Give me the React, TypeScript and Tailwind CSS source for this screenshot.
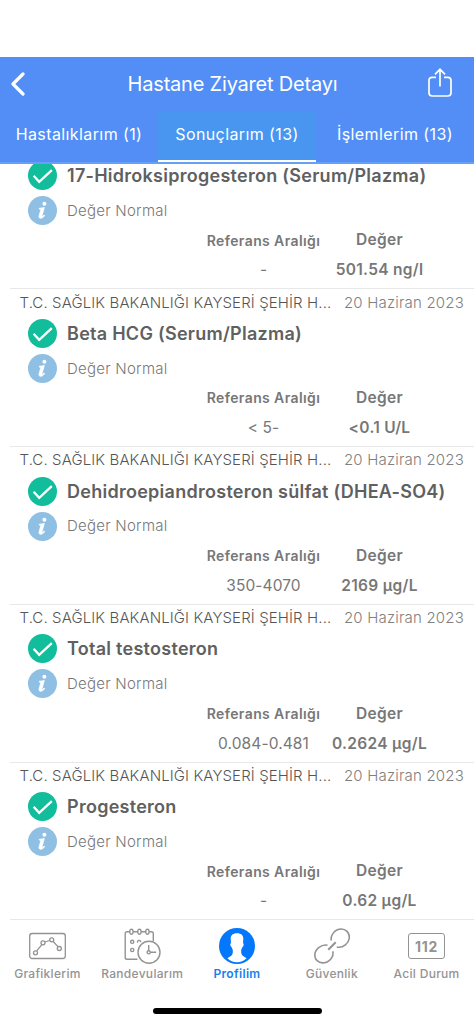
import clsx from 'clsx'
import { PropsWithChildren } from 'react'

type Result = {
  name: string
  range: string
  value: string
}

const results: Result[] = [
  { name: '17-Hidroksiprogesteron (Serum/Plazma)', range: '-', value: '501.54 ng/l' },
  { name: 'Beta HCG (Serum/Plazma)', range: '< 5-', value: '<0.1 U/L' },
  { name: 'Dehidroepiandrosteron sülfat (DHEA-SO4)', range: '350-4070', value: '2169 µg/L' },
  { name: 'Total testosteron', range: '0.084-0.481', value: '0.2624 µg/L' },
  { name: 'Progesteron', range: '-', value: '0.62 µg/L' },
]

function CheckBadge() {
  return (
    <svg className="size-[29px] shrink-0" viewBox="0 0 29 29" fill="none">
      <circle cx="14.5" cy="14.5" r="14.5" fill="#11bd9a" />
      <path d="M5.6 14.8l5.6 6L23.8 9.2" stroke="#fff" strokeWidth="2.3" />
    </svg>
  )
}

function InfoBadge() {
  return (
    <svg className="size-[29px] shrink-0" viewBox="0 0 29 29">
      <circle cx="14.5" cy="14.5" r="14.5" fill="#8fbfe2" />
      <circle cx="16.4" cy="7.8" r="2" fill="#fff" />
      <path
        d="M11.4 12.2c1.6 0 3.2-.3 4.9-.7l-2.3 8.300c-.2.8.2 1 .8.5l1.300-1.300.6.5c-1.200 1.800-2.600 2.800-4 2.800-1.500 0-2-1-1.600-2.500l1.500-5.400c.2-.9-.1-1.200-1.400-1.300z"
        fill="#fff"
        stroke="#fff"
        strokeWidth="0.8"
      />
    </svg>
  )
}

function Tab({ active, children }: PropsWithChildren<{ active?: boolean }>) {
  return (
    <div
      className={clsx(
        'flex h-full flex-1 items-center justify-center border-b-2 pb-1 tracking-[0.4px]',
        active ? 'border-white bg-[#4896ef]' : 'border-transparent',
      )}
    >
      {children}
    </div>
  )
}

function Header() {
  return (
    <header className="shrink-0 bg-[#528ef5] text-white">
      <div className="flex h-[54px] items-center justify-between pr-[22px] pl-2.5">
        <svg className="h-6 w-[15px]" viewBox="0 0 15 24" fill="none" stroke="currentColor" strokeWidth="3.2">
          <path d="M13 2L3 12l10 10" strokeLinecap="round" strokeLinejoin="round" />
        </svg>
        <h1 className="pl-3 text-[20px] font-normal tracking-[-0.2px] whitespace-nowrap">Hastane Ziyaret Detayı</h1>
        <svg className="mb-0.5 h-[30px] w-6" viewBox="0 0 24 30" fill="none" stroke="currentColor" strokeWidth="1.7">
          <path d="M8 9.400H4.200Q1 9.400 1 12.600v12.200Q1 28 4.200 28h15.600q3.200 0 3.200-3.200V12.600q0-3.200-3.200-3.200H16M12 18.500V1.600M7 6.300l5-5 5 5" />
        </svg>
      </div>
      <nav className="flex h-[51px] text-[16px] whitespace-nowrap">
        <Tab>Hastalıklarım (1)</Tab>
        <Tab active>Sonuçlarım (13)</Tab>
        <Tab>İşlemlerim (13)</Tab>
      </nav>
      <div className="h-[1.5px] bg-[#68a0f7]" />
    </header>
  )
}

function RowHeading() {
  return (
    <div className="h-7 shrink-0">
      <div className="ml-2.5 h-px bg-[#e8e8e8]" />
      <div className="flex h-[27px] items-center justify-between pr-2.5 pl-[19.5px] text-[15px] font-light whitespace-nowrap">
        <span className="tracking-[0.12px] text-[#555]">T.C. SAĞLIK BAKANLIĞI KAYSERİ ŞEHİR H...</span>
        <span className="tracking-[0.2px] text-[#808080]">20 Haziran 2023</span>
      </div>
    </div>
  )
}

function ResultRow({ result, first }: { result: Result; first: boolean }) {
  return (
    <li className={clsx('flex shrink-0 flex-col', first ? '-mt-[5px] h-[129.75px]' : 'h-[157.75px]')}>
      {!first && <RowHeading />}
      <div className="flex h-[34px] shrink-0 items-center gap-2.5 pl-7">
        <CheckBadge />
        <span className="text-[18px] font-semibold tracking-[0.27px] whitespace-nowrap text-[#606060]">{result.name}</span>
      </div>
      <div className="flex h-9 shrink-0 items-center gap-2.5 pl-7">
        <InfoBadge />
        <span className="pt-px text-[15px] font-light tracking-[0.25px] text-[#777]">Değer Normal</span>
      </div>
      <div className="grid shrink-0 grid-cols-[116px_116px] grid-rows-[23px_37px] items-center justify-items-center pl-[205.5px] whitespace-nowrap text-[#777]">
        <span className="text-[14px] font-semibold tracking-[0.4px]">Referans Aralığı</span>
        <span className="text-[15.5px] font-semibold tracking-[0.3px]">Değer</span>
        <span className="text-[15.5px] tracking-[0.1px]">{result.range}</span>
        <span className="text-[15.5px] font-semibold tracking-[0.3px]">{result.value}</span>
      </div>
    </li>
  )
}

function ChartIcon() {
  return (
    <svg className="h-9 w-[37px]" viewBox="0 0 37 36" fill="none" stroke="currentColor" strokeWidth="1.3">
      <rect x="0.7" y="5.5" width="35.6" height="25" rx="2.5" />
      <path d="M7.700 22.800l5.200-6.200M16 14l4.700-1.500M24.200 13.500l5 5.400" />
      <circle cx="6.5" cy="24.8" r="2" />
      <circle cx="14" cy="14.8" r="2" />
      <circle cx="22.7" cy="11.8" r="2" />
      <circle cx="30.3" cy="20.5" r="2" />
    </svg>
  )
}

function CalendarIcon() {
  return (
    <svg className="h-9 w-[37px]" viewBox="0 0 37 36" fill="none" stroke="currentColor" strokeWidth="1.4">
      <path d="M6 3.800H3q-1.800 0-1.800 1.800v23.800q0 1.800 1.800 1.800h10.500M9 3.800h5M17 3.800h5M25 3.800h2.500q1.800 0 1.800 1.800V13" />
      <rect x="5.8" y="1.2" width="3.2" height="5" rx="1.6" />
      <rect x="13.8" y="1.2" width="3.2" height="5" rx="1.6" />
      <rect x="21.8" y="1.2" width="3.2" height="5" rx="1.6" />
      <circle cx="8.2" cy="13.8" r="1.6" />
      <path d="M13.700 14.700a1.600 1.600 0 1 1 3-.6" />
      <circle cx="8.2" cy="22" r="1.6" />
      <circle cx="25" cy="24.3" r="11" />
      <circle cx="24.7" cy="24.3" r="1.6" />
      <path d="M24.700 22.500V17M26.400 24.300h5.800" />
    </svg>
  )
}

function ProfileIcon() {
  return (
    <svg className="size-9" viewBox="0 0 36 36">
      <circle cx="18" cy="18" r="18" fill="#0478fa" />
      <path
        d="M18 5.200c-4.700 0-6.300 2.300-6.300 5.600l.3 4.400c-.8 0-.8 1-.5 2.200.3 1 .6 1.400 1.100 1.500.3 1.300.7 2 1.200 2.700 0 2.600.2 4.300-1 5.700-1 1.200-3 1.800-4.400 3 2.600 2.500 5.900 3.900 9.600 3.900s7-1.400 9.600-3.900c-1.400-1.200-3.400-1.800-4.400-3-1.200-1.400-1-3.100-1-5.700.5-.7.9-1.400 1.200-2.700.5-.1.8-.5 1.100-1.500.3-1.200.3-2.200-.5-2.200l.3-4.400c0-3.300-1.600-5.600-6.300-5.600z"
        fill="#fff"
      />
    </svg>
  )
}

function LinkIcon() {
  return (
    <svg className="size-9" viewBox="0 0 36 36" fill="none" stroke="currentColor" strokeWidth="1.6">
      <path d="M17.300 12.500C16.300 7.500 20.500 1 27.300 1c4.500 0 8 3.500 8 8 0 6.200-6.300 11.400-12.500 10" />
      <path d="M13.500 17.200C7 16.200.8 21.500.8 27.200c0 4.300 3.500 7.700 7.800 7.700 6.400 0 11.500-6 10.200-11.700" />
      <path d="M14.200 21.800l7.500-7.600" strokeWidth="2" />
    </svg>
  )
}

function EmergencyIcon() {
  return (
    <div className="flex h-9 items-center">
      <span className="flex h-[26px] w-[37px] items-center justify-center rounded-[3px] border-[1.5px] border-current text-[14px] font-bold tracking-[0.7px]">
        112
      </span>
    </div>
  )
}

const navItems = [
  { label: 'Grafiklerim', icon: <ChartIcon /> },
  { label: 'Randevularım', icon: <CalendarIcon /> },
  { label: 'Profilim', icon: <ProfileIcon />, active: true },
  { label: 'Güvenlik', icon: <LinkIcon /> },
  { label: 'Acil Durum', icon: <EmergencyIcon /> },
]

function BottomNav() {
  return (
    <footer className="h-[105px] shrink-0">
      <div className="ml-2.5 h-px bg-[#e8e8e8]" />
      <div className="flex pt-2">
        {navItems.map(item => (
          <div key={item.label} className={clsx('flex flex-1 flex-col items-center', item.active ? 'text-[#1680ef]' : 'text-[#939393]')}>
            {item.icon}
            <span className={clsx('mt-0.5 text-[12px] leading-4 tracking-[0.3px] whitespace-nowrap', item.active ? 'font-semibold' : 'font-medium')}>
              {item.label}
            </span>
          </div>
        ))}
      </div>
      <div className="mx-auto mt-[26px] h-1.5 w-[169px] rounded-full bg-black" />
    </footer>
  )
}

function App() {
  return (
    <main className="flex h-[1024px] w-[474px] flex-col overflow-hidden bg-white pt-[57px] font-['Inter','Noto_Sans',sans-serif]">
      <Header />
      <ul className="flex min-h-0 flex-1 flex-col overflow-hidden">
        {results.map((result, i) => (
          <ResultRow key={result.name} result={result} first={i === 0} />
        ))}
      </ul>
      <BottomNav />
    </main>
  )
}

export default App
